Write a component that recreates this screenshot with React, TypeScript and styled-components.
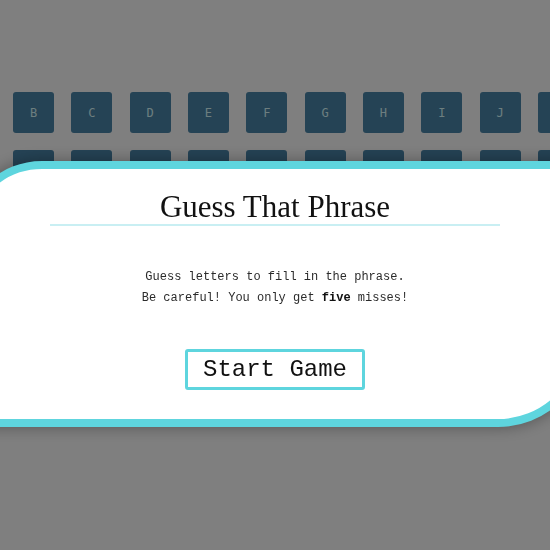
import React from "react";
import styled, { createGlobalStyle } from "styled-components";

const GlobalStyle = createGlobalStyle`
  html, body {
    margin: 0;
    padding: 0;
    width: 100%;
    height: 100%;
    overflow: hidden;
    background: #ffffff;
  }
  #root {
    width: 100%;
    height: 100%;
  }
`;

const Page = styled.main`
  width: 100%;
  height: 100%;
  padding-top: 92px;
  box-sizing: border-box;
`;

const Keyboard = styled.section`
  display: flex;
  flex-direction: column;
  gap: 17px;
  margin-left: -45.33px;
  width: 800px;
`;

const KeyRow = styled.div`
  display: flex;
  gap: 17.33px;
`;

const Key = styled.button`
  width: 41px;
  height: 41px;
  flex: 0 0 41px;
  border: none;
  border-radius: 3px;
  background: #4a86aa;
  color: #dafcff;
  font-family: "DejaVu Sans Mono", "Liberation Mono", monospace;
  font-size: 12px;
  display: flex;
  align-items: center;
  justify-content: center;
  padding: 0;
`;

const Overlay = styled.div`
  position: fixed;
  inset: 0;
  background: rgba(0, 0, 0, 0.5);
  display: flex;
  flex-direction: column;
  align-items: flex-start;
  padding-top: 161px;
  box-sizing: border-box;
  overflow: hidden;
`;

const Modal = styled.div`
  width: 626px;
  flex: 0 0 auto;
  margin-left: -38px;
  box-sizing: border-box;
  background: #ffffff;
  border: 8px solid #5ed5de;
  border-radius: 80px 0 90px 0;
  box-shadow: 0 0 16px rgba(0, 0, 0, 0.35);
  padding: 21px 0 29px;
  display: flex;
  flex-direction: column;
  align-items: center;
`;

const Title = styled.h1`
  margin: 0;
  width: 450px;
  text-align: center;
  font-family: "Liberation Serif", "DejaVu Serif", serif;
  font-weight: 400;
  font-size: 31px;
  line-height: 34px;
  color: #111111;
  border-bottom: 2px solid #c9eff3;
`;

const Instructions = styled.p`
  margin: 41px 0 0;
  text-align: center;
  font-family: "Liberation Mono", "DejaVu Sans Mono", monospace;
  font-size: 12px;
  line-height: 21px;
  color: #2b2b2b;

  strong {
    font-weight: 700;
    color: #111111;
  }
`;

const StartButton = styled.button`
  margin-top: 40px;
  background: #ffffff;
  border: 3px solid #5ed5de;
  border-radius: 3px;
  padding: 4px 15px;
  font-family: "Liberation Mono", "DejaVu Sans Mono", monospace;
  font-size: 24px;
  line-height: normal;
  color: #111111;
  cursor: pointer;
`;

const rows = [
  "ABCDEFGHIJKLM".split(""),
  "NOPQRSTUVWXYZ".split(""),
];

export default function App() {
  return (
    <>
      <GlobalStyle />
      <Page>
        <Keyboard>
          {rows.map((row, i) => (
            <KeyRow key={i}>
              {row.map((l) => (
                <Key key={l}>{l}</Key>
              ))}
            </KeyRow>
          ))}
        </Keyboard>
      </Page>
      <Overlay>
        <Modal>
          <Title>Guess That Phrase</Title>
          <Instructions>
            Guess letters to fill in the phrase.
            <br />
            Be careful! You only get <strong>five</strong> misses!
          </Instructions>
          <StartButton>Start Game</StartButton>
        </Modal>
      </Overlay>
    </>
  );
}
